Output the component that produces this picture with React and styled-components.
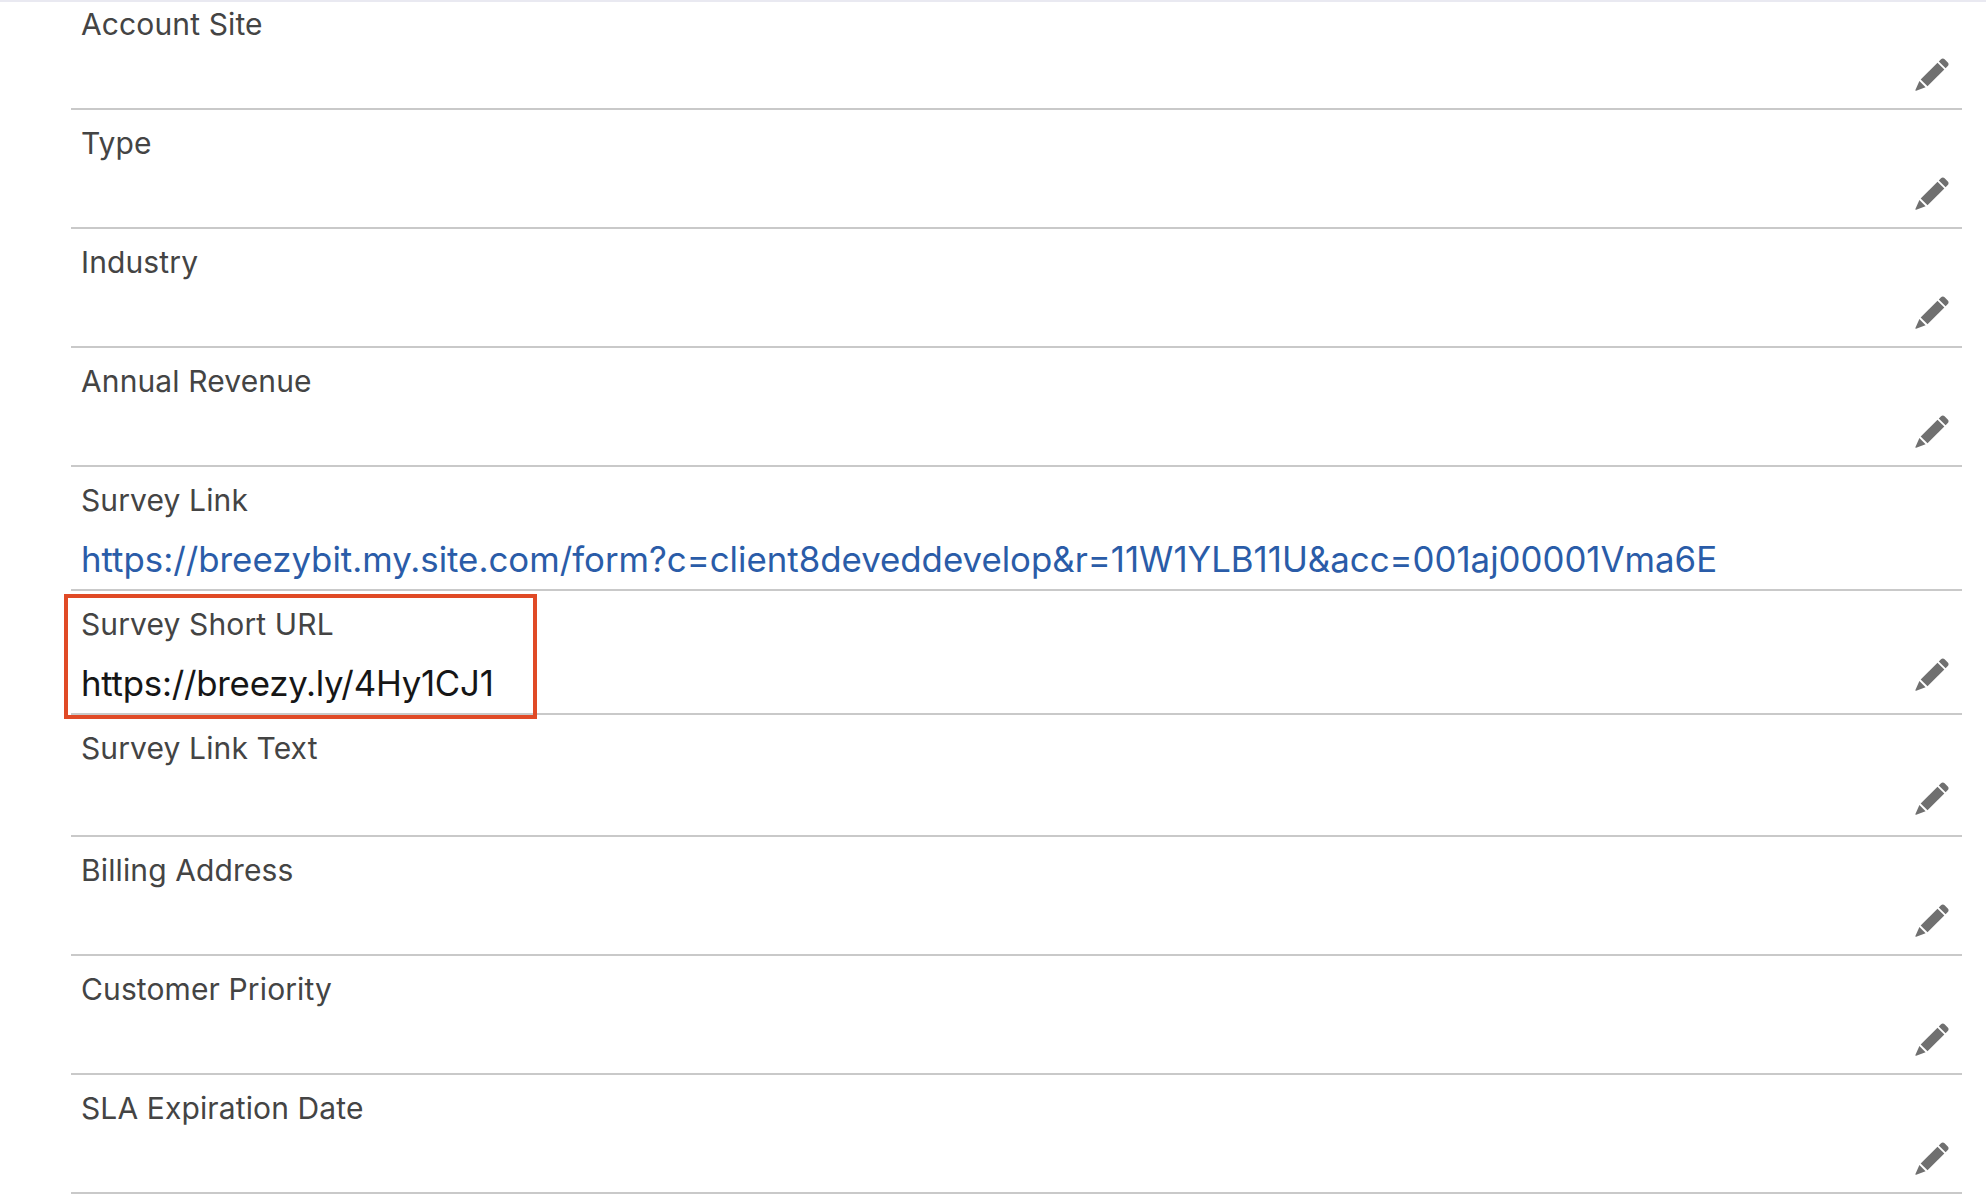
import React from "react";
import styled, { createGlobalStyle } from "styled-components";

const fields = [
  { label: "Account Site", height: 119 },
  { label: "Type", height: 119 },
  { label: "Industry", height: 119 },
  { label: "Annual Revenue", height: 119 },
  {
    label: "Survey Link",
    value: "https://breezybit.my.site.com/form?c=client8deveddevelop&r=11W1YLB11U&acc=001aj00001Vma6E",
    link: true,
    locked: true,
    height: 124,
  },
  { label: "Survey Short URL", value: "https://breezy.ly/4Hy1CJ1", height: 124, marked: true, iconGap: 20 },
  { label: "Survey Link Text", height: 122, iconGap: 18 },
  { label: "Billing Address", height: 119 },
  { label: "Customer Priority", height: 119 },
  { label: "SLA Expiration Date", height: 119 },
];

function Pencil({ gap }) {
  return (
    <PencilSvg viewBox="0 0 36 36" $gap={gap}>
      <path d="M27 2.2c1-1 2.6-1 3.6 0l3.2 3.2c1 1 1 2.6 0 3.6l-2.2 2.2-6.8-6.8z" />
      <path d="M23.5 5.7l6.8 6.8-16.8 16.8-6.8-6.8z" />
      <path d="M5.4 24l6.2 6.2-9.4 3.5c-.5.2-1-.3-.8-.8z" />
    </PencilSvg>
  );
}

function App() {
  return (
    <Page>
      <GlobalStyle />
      <List>
        {fields.map((field) => (
          <Row key={field.label} $height={field.height}>
            <Content>
              <Label>{field.label}</Label>
              {field.value && (
                <Value $link={field.link} $tight={field.marked}>
                  {field.value}
                </Value>
              )}
            </Content>
            {!field.locked && <Pencil gap={field.iconGap} />}
            {field.marked && <Highlight />}
          </Row>
        ))}
      </List>
    </Page>
  );
}

export default App;

const GlobalStyle = createGlobalStyle`
  body {
    margin: 0;
    background-color: #fff;
    font-family: Inter, "Liberation Sans", sans-serif;
  }
`;

const Page = styled.div`
  width: 1986px;
  height: 1199px;
  box-sizing: border-box;
  border-top: 2px solid #e9e9f1;
  padding: 0 24px 0 71px;
  overflow: hidden;
`;

const List = styled.div`
  display: flex;
  flex-direction: column;
  margin-top: -11px;
`;

const Row = styled.div`
  position: relative;
  height: ${(props) => props.$height}px;
  box-sizing: border-box;
  border-bottom: 2px solid #c9c9c9;
  padding: 0 12px 0 10px;
  display: flex;
  justify-content: space-between;
  align-items: flex-end;
`;

const Content = styled.div`
  align-self: flex-start;
  padding-top: 14px;
`;

const Label = styled.div`
  font-size: 30px;
  line-height: 38px;
  letter-spacing: 0.12px;
  color: #444444;
`;

const Value = styled.div`
  margin-top: 19px;
  font-size: 34.8px;
  line-height: 42px;
  letter-spacing: ${(props) => (props.$tight ? "-0.25px" : "0")};
  white-space: nowrap;
  color: ${(props) => (props.$link ? "#2a5ca8" : "#161616")};
`;

const PencilSvg = styled.svg`
  width: 36px;
  height: 36px;
  margin-bottom: ${(props) => props.$gap ?? 15}px;
  fill: #707070;
  flex-shrink: 0;
`;

const Highlight = styled.div`
  position: absolute;
  left: -7px;
  top: 3px;
  width: 473px;
  height: 125px;
  box-sizing: border-box;
  border: 4px solid #e04a26;
`;
